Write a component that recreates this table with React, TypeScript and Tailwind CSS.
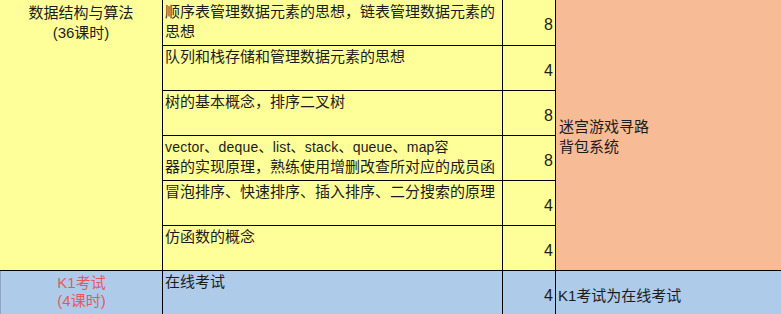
const yellow = "bg-[#ffff99]";
const blue = "bg-[#aecbea]";

const rows: { topic: string[]; hours: number; latin?: boolean }[] = [
  { topic: ["顺序表管理数据元素的思想，链表管理数据元素的", "思想"], hours: 8 },
  { topic: ["队列和栈存储和管理数据元素的思想"], hours: 4 },
  { topic: ["树的基本概念，排序二叉树"], hours: 8 },
  {
    topic: [
      "vector、deque、list、stack、queue、map容",
      "器的实现原理，熟练使用增删改查所对应的成员函",
    ],
    hours: 8,
    latin: true,
  },
  { topic: ["冒泡排序、快速排序、插入排序、二分搜索的原理"], hours: 4 },
  { topic: ["仿函数的概念"], hours: 4 },
];

export default function App() {
  return (
    <div
      className="h-[314px] w-[781px] overflow-hidden bg-white text-[15px] leading-[20px] text-[#1c1c1c]"
      style={{ fontFamily: '"Liberation Sans", "Noto Sans CJK SC", sans-serif' }}
    >
      <div className="grid grid-cols-[163px_340px_53px_225px] grid-rows-[46px_45px_45px_45px_45px_45px_43px]">
        <div
          className={`${yellow} row-span-6 border-b border-r border-black pt-[3px] text-center`}
        >
          <div>数据结构与算法</div>
          <div>(36课时)</div>
        </div>

        {rows.map((r, i) => (
          <Row key={i} topic={r.topic} hours={r.hours} first={i === 0} latin={!!r.latin} />
        ))}

        <div className="col-start-4 row-span-6 row-start-1 flex flex-col justify-center border-b border-black bg-[#f7bc95] pl-[3px] pt-[4px]">
          <div>迷宫游戏寻路</div>
          <div>背包系统</div>
        </div>

        <div
          className={`${blue} border-l border-r border-l-[#8fa6c2] border-r-black pt-[3px] text-center leading-[18px] text-[#e45a5c]`}
        >
          <div>K1考试</div>
          <div>(4课时)</div>
        </div>
        <div className={`${blue} border-r border-black pl-[2px] pt-[1px]`}>在线考试</div>
        <div className={`${blue} border-r border-black pr-[2px] pt-[15px] text-right text-[16px]`}>4</div>
        <div className={`${blue} pl-[2px] pt-[15px]`}>K1考试为在线考试</div>
      </div>
    </div>
  );
}

function Row({
  topic,
  hours,
  first,
  latin,
}: {
  topic: string[];
  hours: number;
  first: boolean;
  latin: boolean;
}) {
  return (
    <>
      <div
        className={`${yellow} col-start-2 overflow-hidden whitespace-nowrap border-b border-r border-black pl-[2px] ${first ? "pt-[2px]" : "pt-[1px]"}`}
      >
        {topic.map((t, j) => (
          <div key={t} className={latin && j === 0 ? "text-[14px] tracking-[0.2px]" : ""}>
            {t}
          </div>
        ))}
      </div>
      <div className={`${yellow} border-b border-r border-black pr-[2px] pt-[15px] text-right text-[16px]`}>
        {hours}
      </div>
    </>
  );
}
